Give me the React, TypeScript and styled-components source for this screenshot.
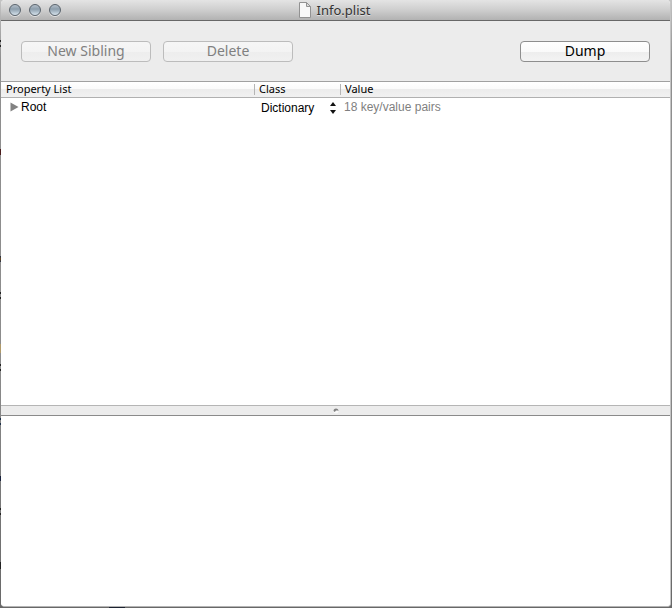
import React from "react";
import styled, { createGlobalStyle } from "styled-components";

const Global = createGlobalStyle`
  *, *::before, *::after { box-sizing: border-box; }
  body {
    margin: 0;
    background: #8c8c8c;
    font-family: "Noto Sans", "Open Sans", sans-serif;
    color: #000;
  }
`;

/* Slivers of the windows behind show along the left and bottom edges. */
const Desktop = styled.div`
  min-height: 100vh;
  display: flex;
  padding: 0 1px 1px;
  background:
    linear-gradient(#222, #222) 0 40px / 1px 2px no-repeat,
    linear-gradient(#222, #222) 0 45px / 1px 2px no-repeat,
    linear-gradient(#4a1c1c, #4a1c1c) 0 149px / 1px 6px no-repeat,
    linear-gradient(#23304a, #6b4a20, #23304a) 0 256px / 1px 6px no-repeat,
    linear-gradient(#222, #222) 0 292px / 1px 2px no-repeat,
    linear-gradient(#222, #222) 0 297px / 1px 2px no-repeat,
    linear-gradient(#b09a6a, #b09a6a) 0 344px / 1px 9px no-repeat,
    linear-gradient(#222, #222) 0 364px / 1px 2px no-repeat,
    linear-gradient(#222, #222) 0 369px / 1px 2px no-repeat,
    linear-gradient(#1d3048, #1d3048) 0 418px / 1px 2px no-repeat,
    linear-gradient(#1d3048, #1d3048) 0 423px / 1px 2px no-repeat,
    linear-gradient(#17203c, #17203c) 0 476px / 1px 5px no-repeat,
    linear-gradient(#222, #222) 0 508px / 1px 2px no-repeat,
    linear-gradient(#222, #222) 0 513px / 1px 2px no-repeat,
    linear-gradient(#222, #222) 0 562px / 1px 7px no-repeat,
    linear-gradient(#1c2230, #1c2230) 109px 100% / 16px 1px no-repeat,
    linear-gradient(#c4c4c4, #8f8f8f 60px, #8c8c8c 60%, #686868);
`;

const Window = styled.main`
  flex: 1;
  min-width: 0;
  display: grid;
  grid-template-rows: 21px 60px minmax(0, 324fr) 11px minmax(0, 190fr);
  overflow: hidden;
  border-radius: 4px;
  border-right: 1px solid #c4c4c4;
  border-bottom: 1px solid #b4b4b4;
  background: #fff;
`;

const TitleBar = styled.header`
  display: grid;
  grid-template-columns: 1fr auto 1fr;
  align-items: center;
  padding: 0 8px;
  border-bottom: 1px solid #686868;
  background: linear-gradient(#e4e4e4, #cecece 50%, #b2b2b2);
`;

const Lights = styled.div`
  display: flex;
  gap: 8px;
`;

const Light = styled.button`
  width: 12px;
  height: 12px;
  padding: 0;
  border: 1px solid #59636c;
  border-radius: 50%;
  background: linear-gradient(#b4bfc9, #8d9eac 40%, #b0c0cc 70%, #d8e4ed);
  box-shadow: 0 1px 0 #e2e2e2;
`;

const Title = styled.h1`
  display: flex;
  align-items: center;
  gap: 6px;
  margin: 0;
  padding-right: 2px;
  font-size: 13px;
  line-height: 20px;
  font-weight: 400;
  color: #333;
  text-shadow: 0 1px 0 #dedede;
`;

const Toolbar = styled.div`
  display: flex;
  align-items: center;
  gap: 12px;
  padding: 0 20px;
  background: #ececec;
`;

const PushButton = styled.button<{ $end?: boolean }>`
  width: 130px;
  height: 21px;
  padding: 0 0 2px;
  margin-left: ${(p) => (p.$end ? "auto" : "0")};
  border: 1px solid #8e8e8e;
  border-radius: 4px;
  background: linear-gradient(#fff, #fafafa 50%, #ededed 51%, #f3f3f3);
  font: 14px/17px "Noto Sans", "Open Sans", sans-serif;
  color: #000;
  &:disabled {
    border-color: #bcbcbc;
    background: linear-gradient(#f6f6f6, #f3f3f3 50%, #ededed 51%, #f0f0f0);
    color: #808080;
  }
`;

const Pane = styled.section`
  overflow: auto;
  background: #fff;
`;

const Outline = styled.table`
  width: 100%;
  table-layout: fixed;
  border-collapse: separate;
  border-spacing: 0;
  font-size: 11px;
`;

const Column = styled.col<{ $width?: number }>`
  width: ${(p) => (p.$width ? `${p.$width}px` : "auto")};
`;

const Heading = styled.th`
  height: 17px;
  padding: 0 5px 1px;
  border-top: 1px solid #a0a0a0;
  border-bottom: 1px solid #b0b0b0;
  background: linear-gradient(#fff, #fafafa 45%, #ececec 50%, #f1f1f1);
  text-align: left;
  font-weight: 400;
  line-height: 14px;
  & + & {
    background: linear-gradient(#b5b5b5, #b5b5b5) 0 2px / 1px 11px no-repeat,
      linear-gradient(#fff, #fafafa 45%, #ececec 50%, #f1f1f1);
  }
`;

const Cell = styled.td<{ $muted?: boolean }>`
  height: 18px;
  padding: 0 4px;
  vertical-align: top;
  font: 12px/18px "Liberation Sans", Arial, sans-serif;
  color: ${(p) => (p.$muted ? "#7f7f7f" : "#000")};
`;

const NodeLabel = styled.div`
  display: flex;
  align-items: center;
  gap: 2px;
  padding-left: 5px;
`;

const Disclosure = styled.button`
  display: flex;
  padding: 0;
  border: 0;
  background: none;
`;

const PopUp = styled.label`
  display: grid;
  grid-template-columns: 1fr 6px;
  align-items: center;
  padding: 1px 0 0 3px;
`;

const ClassSelect = styled.select`
  grid-area: 1 / 1 / 2 / 3;
  appearance: none;
  width: 100%;
  padding: 0;
  border: 0;
  background: none;
  font: 12px/18px "Liberation Sans", Arial, sans-serif;
  color: #000;
`;

const Arrows = styled.svg`
  grid-area: 1 / 2;
  pointer-events: none;
`;

const Splitter = styled.div`
  display: flex;
  align-items: center;
  justify-content: center;
  border-top: 1px solid #b5b5b5;
  border-bottom: 1px solid #8a8a8a;
  background: #ececec;
`;

export default function App() {
  return (
    <>
      <Global />
      <Desktop>
        <Window>
          <TitleBar>
            <Lights>
              <Light aria-label="Close" />
              <Light aria-label="Minimize" />
              <Light aria-label="Zoom" />
            </Lights>
            <Title>
              <svg width="12" height="16" viewBox="0 0 12 16" aria-hidden="true">
                <path d="M.5.5h7l4 4v11H.5z" fill="#f8f8f8" stroke="#929292" />
                <path d="M7.5.5v4h4z" fill="#dcdcdc" stroke="#929292" strokeLinejoin="round" />
              </svg>
              Info.plist
            </Title>
          </TitleBar>
          <Toolbar>
            <PushButton disabled>New Sibling</PushButton>
            <PushButton disabled>Delete</PushButton>
            <PushButton $end>Dump</PushButton>
          </Toolbar>
          <Pane>
            <Outline>
              <colgroup>
                <Column $width={253} />
                <Column $width={86} />
                <Column />
              </colgroup>
              <thead>
                <tr>
                  <Heading scope="col">Property List</Heading>
                  <Heading scope="col">Class</Heading>
                  <Heading scope="col">Value</Heading>
                </tr>
              </thead>
              <tbody>
                <tr>
                  <Cell>
                    <NodeLabel>
                      <Disclosure aria-label="Expand Root">
                        <svg width="9" height="10" viewBox="0 0 9 10" aria-hidden="true">
                          <path d="M.5 .5v9L8.5 5z" fill="#828282" />
                        </svg>
                      </Disclosure>
                      Root
                    </NodeLabel>
                  </Cell>
                  <Cell>
                    <PopUp>
                      <ClassSelect aria-label="Class of Root" defaultValue="Dictionary">
                        <option>Dictionary</option>
                      </ClassSelect>
                      <Arrows width="6" height="12" viewBox="0 0 6 12" aria-hidden="true">
                        <path d="M3 0l3 4H0zM3 12L0 8h6z" fill="#111" />
                      </Arrows>
                    </PopUp>
                  </Cell>
                  <Cell $muted>18 key/value pairs</Cell>
                </tr>
              </tbody>
            </Outline>
          </Pane>
          <Splitter role="separator" aria-orientation="horizontal">
            <svg width="6" height="6" viewBox="0 0 6 6" aria-hidden="true">
              <circle cx="3" cy="3" r="2.5" fill="#fafafa" />
              <path d="M.5 3A2.5 2.5 0 0 1 5.5 3L4.5 2.6 3 2.6 1.8 4z" fill="#808080" />
            </svg>
          </Splitter>
          <Pane aria-label="Output" />
        </Window>
      </Desktop>
    </>
  );
}
